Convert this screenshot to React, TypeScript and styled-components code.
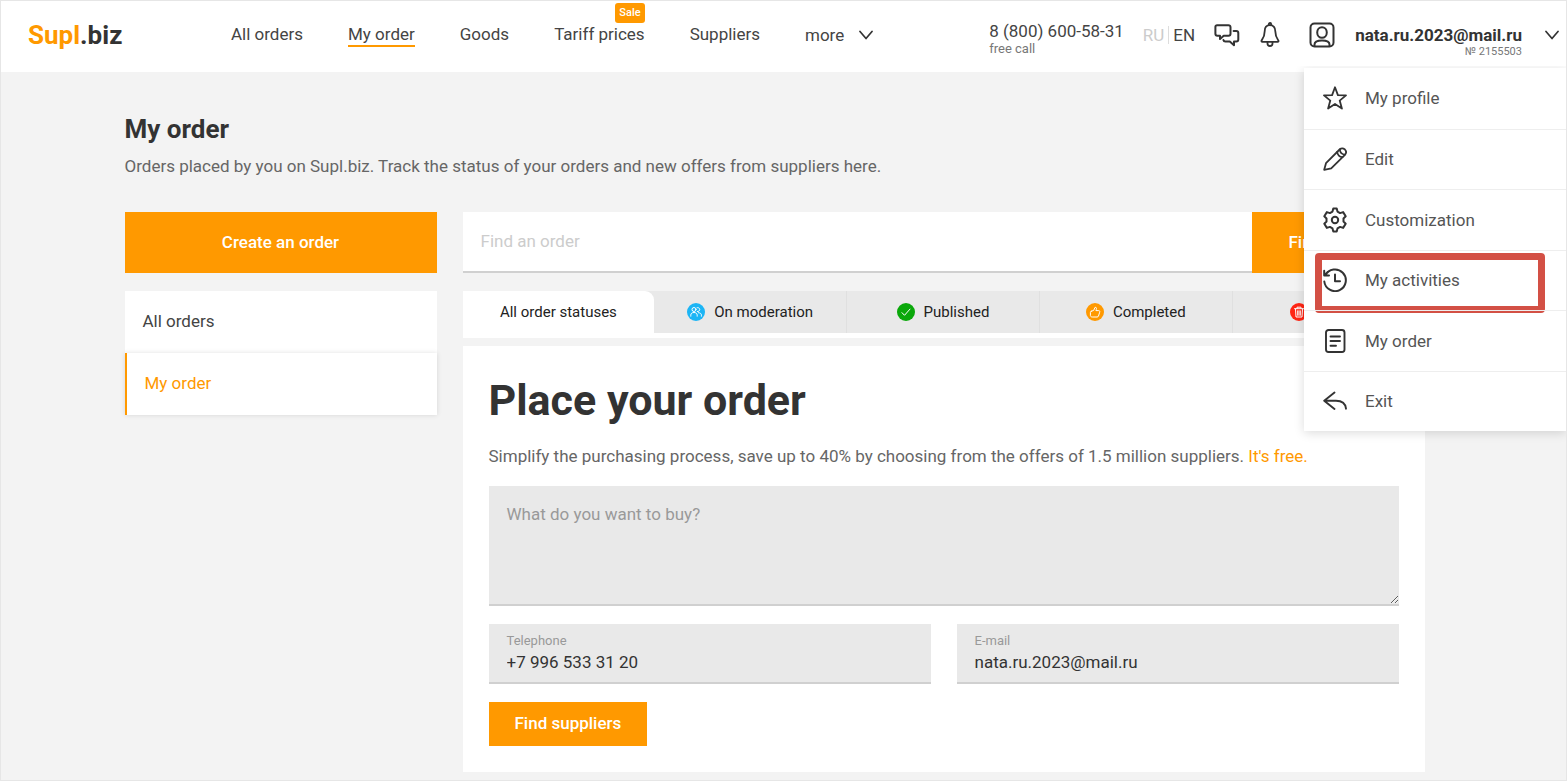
import React from "react";
import styled, { createGlobalStyle, css } from "styled-components";

const orange = "#ff9900";
const ink = "#333333";
const surface = "#e9e9e9";

const GlobalStyle = createGlobalStyle`
  *, *::before, *::after { box-sizing: border-box; }
  body {
    margin: 0;
    background: #f3f3f3;
    color: ${ink};
    font-family: Roboto, "Liberation Sans", sans-serif;
    font-size: 17px;
    line-height: 24px;
  }
  a { color: inherit; text-decoration: none; }
  button, input, textarea { font: inherit; color: inherit; border: 0; border-radius: 0; }
  button { cursor: pointer; background: none; padding: 0; }
  h1, h2, p, ul { margin: 0; padding: 0; }
  ul { list-style: none; }
`;

const Page = styled.div`
  min-height: 100vh;
  border: 1px solid #e6e6e6;
`;

const Header = styled.header`
  position: relative;
  display: flex;
  align-items: center;
  height: 71px;
  padding: 0 7px 4px 27px;
  background: #ffffff;
`;

const Logo = styled.a`
  width: 203px;
  font-size: 26px;
  font-weight: 700;
  line-height: 32px;
  span { color: ${orange}; }
`;

const MainNav = styled.nav`
  display: flex;
  align-items: center;
  gap: 45px;
`;

const NavLink = styled.a<{ $active?: boolean }>`
  position: relative;
  line-height: 22px;
  color: #444444;
  border-bottom: 2px solid ${({ $active }) => ($active ? orange : "transparent")};
`;

const SaleBadge = styled.span`
  position: absolute;
  right: 0;
  bottom: 22px;
  padding: 0 4px;
  border-radius: 3px;
  background: ${orange};
  color: #ffffff;
  font-size: 11px;
  font-weight: 500;
  line-height: 20px;
`;

const MoreButton = styled.button`
  display: flex;
  align-items: center;
  gap: 15px;
  color: #444444;
  line-height: 22px;
`;

const HeaderTools = styled.div`
  display: flex;
  align-items: center;
  margin-left: auto;
`;

const Phone = styled.a`
  display: flex;
  flex-direction: column;
  margin-right: 19px;
  padding-top: 8px;
  color: #444444;
  line-height: 20px;
`;

const Caption = styled.span`
  font-size: 13px;
  line-height: 16px;
  color: #777777;
`;

const Languages = styled.div`
  display: flex;
  gap: 4px;
  margin-right: 19px;
  line-height: 18px;
`;

const Language = styled.a<{ $current?: boolean }>`
  color: ${({ $current }) => ($current ? "#444444" : "#cccccc")};
  & + & { padding-left: 4px; border-left: 1px solid #dddddd; }
`;

const IconButton = styled.button`
  display: flex;
  margin-right: 20px;
`;

const Account = styled.button`
  display: flex;
  align-items: center;
  gap: 20px;
  margin-left: 9px;
`;

const AccountName = styled.span`
  position: relative;
  font-weight: 700;
`;

const AccountNumber = styled.span`
  position: absolute;
  top: 22px;
  right: 0;
  font-size: 11px;
  font-weight: 400;
  line-height: 14px;
  color: #777777;
`;

const ChevronSlot = styled.span`
  display: flex;
  margin-left: 3px;
`;

const AccountMenu = styled.ul`
  position: absolute;
  z-index: 2;
  top: 67px;
  right: 0;
  display: grid;
  grid-auto-rows: 1fr;
  width: 262px;
  height: 363px;
  background: #ffffff;
  box-shadow: 0 2px 10px rgba(0, 0, 0, 0.14);
  clip-path: inset(-2px 0 -14px -14px);
`;

const MenuItem = styled.li`
  position: relative;
  & + & { border-top: 1px solid #eeeeee; }
`;

const MenuLink = styled.a`
  display: flex;
  align-items: center;
  gap: 18px;
  height: 100%;
  padding-left: 19px;
  color: #555555;
`;

const Highlight = styled.span`
  position: absolute;
  inset: 2px 21px -3px 11px;
  border: 7px solid #d35045;
  border-radius: 4px;
  pointer-events: none;
`;

const Scroller = styled.div`
  padding-right: 18px;
`;

const Content = styled.main`
  max-width: 1300px;
  margin: 0 auto;
  padding: 41px 0 8px;
`;

const PageTitle = styled.h1`
  font-size: 26px;
  font-weight: 700;
  line-height: 32px;
`;

const PageLead = styled.p`
  padding-top: 9px;
  color: #666666;
`;

const Columns = styled.div`
  display: grid;
  grid-template-columns: 312px minmax(0, 1fr);
  gap: 26px;
  margin-top: 34px;
`;

const Stack = styled.div`
  display: flex;
  flex-direction: column;
  gap: 18px;
`;

const Button = styled.button<{ $size: "large" | "small" }>`
  background: ${orange};
  color: #ffffff;
  font-weight: 500;
  ${({ $size }) =>
    $size === "large"
      ? css`height: 61px; padding: 0 36px 2px;`
      : css`height: 44px; padding: 0 26px 2px; align-self: flex-start;`}
`;

const SideNav = styled.nav`
  display: flex;
  flex-direction: column;
`;

const SideLink = styled.a<{ $active?: boolean }>`
  display: flex;
  align-items: center;
  height: 62px;
  padding: 0 18px 2px;
  background: #ffffff;
  color: #444444;
  ${({ $active }) =>
    $active &&
    css`
      border-left: 2px solid ${orange};
      color: ${orange};
      box-shadow: 0 0 5px rgba(0, 0, 0, 0.12);
    `}
`;

const SearchForm = styled.form`
  display: flex;
`;

const SearchInput = styled.input`
  flex: 1;
  min-width: 0;
  height: 61px;
  padding: 0 18px 2px;
  border-bottom: 2px solid #d0d0d0;
  background: #ffffff;
  &::placeholder { color: #cccccc; opacity: 1; }
`;

const Results = styled.div`
  display: flex;
  flex-direction: column;
  gap: 8px;
`;

const Tabs = styled.div`
  display: flex;
  padding-bottom: 5px;
  background: linear-gradient(to bottom, ${surface} 42px, #ffffff 42px);
`;

const Tab = styled.button<{ $active?: boolean }>`
  display: flex;
  flex: 1;
  align-items: center;
  justify-content: center;
  gap: 9px;
  height: 42px;
  border-right: 1px solid #e0e0e0;
  background: ${surface};
  color: #222222;
  font-size: 15px;
  &:last-child { border-right: 0; }
  ${({ $active }) =>
    $active &&
    css`
      border-right: 0;
      border-top-right-radius: 9px;
      background: #ffffff;
    `}
`;

const OrderCard = styled.form`
  display: flex;
  flex-direction: column;
  gap: 18px;
  padding: 26px;
  background: #ffffff;
`;

const CardTitle = styled.h2`
  font-size: 43px;
  font-weight: 700;
  line-height: 56px;
`;

const CardLead = styled.p`
  color: #666666;
  a { color: ${orange}; }
`;

const CardHeading = styled.div`
  display: flex;
  flex-direction: column;
  gap: 16px;
`;

const OrderText = styled.textarea`
  display: block;
  width: 100%;
  height: 120px;
  padding: 16px 18px;
  border-bottom: 2px solid #d0d0d0;
  background: ${surface};
  resize: vertical;
  &::placeholder { color: #999999; opacity: 1; }
`;

const FieldRow = styled.div`
  display: grid;
  grid-template-columns: 1fr 1fr;
  gap: 26px;
`;

const Field = styled.label`
  display: flex;
  flex-direction: column;
  height: 60px;
  padding: 9px 18px 0;
  border-bottom: 2px solid #d0d0d0;
  background: ${surface};
  font-size: 13px;
  line-height: 16px;
  color: #999999;
`;

const FieldInput = styled.input`
  height: 26px;
  padding: 0;
  background: transparent;
  color: ${ink};
  font-size: 17px;
`;

type IconProps = { width?: number; height?: number; stroke?: number; children: React.ReactNode };

const Icon = ({ width = 24, height = 24, stroke = 2, children }: IconProps) => (
  <svg
    width={width}
    height={height}
    viewBox={`0 0 ${width} ${height}`}
    fill="none"
    stroke={ink}
    strokeWidth={stroke}
    strokeLinecap="round"
    strokeLinejoin="round"
    aria-hidden="true"
  >
    {children}
  </svg>
);

const Chevron = () => (
  <Icon width={14} height={10} stroke={1.7}>
    <path d="M1 1.5 7 8.500 13 1.500" />
  </Icon>
);

const ChatIcon = () => (
  <Icon width={26}>
    <path d="M3 2.2h11.5a2 2 0 0 1 2 2v6.6a2 2 0 0 1-2 2h-4.8L6 16v-3.2H3.4a2 2 0 0 1-2-2V3.8A1.6 1.6 0 0 1 3 2.2Z" />
    <path d="M19.6 8h2.700a2 2 0 0 1 2 2v6.600a2 2 0 0 1-2 2h-2.300v3.600l-4.200-3.600h-4.400a2 2 0 0 1-2-1.600" />
  </Icon>
);

const BellIcon = () => (
  <Icon width={20} height={26} stroke={1.8}>
    <path d="M10 3.200c-3.400 0-5.300 2.600-5.300 6 0 4.600-1.300 6.900-3 9.200-.5.700-.2 1.500.7 1.500h15.200c.9 0 1.200-.8.700-1.500-1.700-2.300-3-4.600-3-9.200 0-3.400-1.900-6-5.300-6Z" />
    <path d="M8.800 3.200V2.200a1.200 1.200 0 0 1 2.400 0v1M7.500 20.200v1.300a2.500 2.500 0 0 0 5 0v-1.300" />
  </Icon>
);

const UserIcon = () => (
  <Icon width={26} height={26}>
    <rect x="1.500" y="1.500" width="23" height="23" rx="4" />
    <ellipse cx="13" cy="10.500" rx="4.800" ry="5.300" />
    <path d="M5.500 24v-1.500c0-2.800 3-4 7.500-4s7.500 1.200 7.500 4V24" />
  </Icon>
);

const StarIcon = () => (
  <Icon stroke={1.8}>
    <path d="m12 1.300 2.900 7.800 8.100.300-6.300 5.200 2.200 8L12 18l-6.900 4.600 2.200-8L1 9.400l8.100-.300Z" />
  </Icon>
);

const PencilIcon = () => (
  <Icon stroke={1.8}>
    <path d="M1.200 22.800 3 16.200 16.600 2.500a4 4 0 0 1 5.300 0 3.900 3.900 0 0 1 0 5.300L8.200 21.300Z" />
    <path d="M14.200 5c.4 3 2.400 4.900 5.300 5.200M16.800 2.500c.3 2.900 2.100 4.800 5 5.200" />
  </Icon>
);

const GearIcon = () => (
  <Icon width={24} height={26}>
    <path d="M9.500 4.600 10.300 1.500h3.400l.8 3.100 2.600 1.500 3-1 2.600 4.200-2.200 2.200v3l2.200 2.200-2.600 4.200-3-1-2.600 1.500-.8 3.100h-3.400l-.8-3.100-2.600-1.500-3 1-2.600-4.200 2.200-2.200v-3L1.300 9.300l2.600-4.200 3 1Z" />
    <circle cx="12" cy="13" r="3.200" />
  </Icon>
);

const HistoryIcon = () => (
  <Icon>
    <path d="M2.400 7.400A10.800 10.800 0 1 1 1.300 13.500M1.200 2.800v4.800h4.800M1.500 7.300l3-3.200M12 6.500v6.800h5" />
  </Icon>
);

const DocumentIcon = () => (
  <Icon stroke={1.900}>
    <rect x="3" y="1" width="18.500" height="22" rx="2.500" />
    <path d="M7.500 7.500h9.500M7.500 12h9.500M7.500 16.800h5.500" />
  </Icon>
);

const ExitIcon = () => (
  <Icon stroke={1.900}>
    <path d="M11.500 3.500 1.200 11.700l10.300 8.200M1.500 11.700h11.500c5.600 0 9.500 2.800 10 8" />
  </Icon>
);

const StatusIcon = ({ color, children }: { color: string; children: React.ReactNode }) => (
  <svg width="18" height="18" viewBox="0 0 18 18" fill="none" stroke="#ffffff" strokeLinecap="round" strokeLinejoin="round" aria-hidden="true">
    <circle cx="9" cy="9" r="9" fill={color} stroke="none" />
    {children}
  </svg>
);

const menuItems = [
  { label: "My profile", icon: <StarIcon /> },
  { label: "Edit", icon: <PencilIcon /> },
  { label: "Customization", icon: <GearIcon /> },
  { label: "My activities", icon: <HistoryIcon />, highlighted: true },
  { label: "My order", icon: <DocumentIcon /> },
  { label: "Exit", icon: <ExitIcon /> },
];

const statusTabs = [
  { label: "All order statuses", icon: null },
  {
    label: "On moderation",
    icon: (
      <StatusIcon color="#1cb5f5">
        <circle cx="7" cy="6.500" r="2" />
        <path d="M3.800 13.200v-1c0-1.800 1.200-2.700 3.200-2.700s3.200 1 3.200 2.700v1M10 4.700a2 2 0 1 1 .3 3.800M11.500 9.700c1.800 0 2.900 1 2.900 2.500v1" />
      </StatusIcon>
    ),
  },
  {
    label: "Published",
    icon: (
      <StatusIcon color="#0aa80a">
        <path d="m5 9.700 2.500 2.600 5.500-6.200" />
      </StatusIcon>
    ),
  },
  {
    label: "Completed",
    icon: (
      <StatusIcon color={orange}>
        <path d="M5.200 8.300 7.700 7.400 9 4.400c1.500-.3 1.700.8 1.300 1.900l-.4 1.300h2.800c1 0 1.300.8 1 1.600l-1.200 3.800c-.2.700-.7 1-1.400 1H6.200c-1 0-1.800-.6-1.800-1.500V9.500c0-.6.300-1 .8-1.200Z" />
      </StatusIcon>
    ),
  },
  {
    label: "Deleted",
    icon: (
      <StatusIcon color="#ff2514">
        <path d="M4.500 5.700h9M7 5.500V4.200h4v1.300M5.500 6l.5 8h6l.5-8M7.700 7.800v4.500M9 7.800v4.500M10.300 7.800v4.500" />
      </StatusIcon>
    ),
  },
];

export default function App() {
  return (
    <Page>
      <GlobalStyle />
      <Header>
        <Logo href="#"><span>Supl</span>.biz</Logo>
        <MainNav aria-label="Main">
          <NavLink href="#">All orders</NavLink>
          <NavLink href="#" $active aria-current="page">My order</NavLink>
          <NavLink href="#">Goods</NavLink>
          <NavLink href="#">Tariff prices<SaleBadge>Sale</SaleBadge></NavLink>
          <NavLink href="#">Suppliers</NavLink>
          <MoreButton type="button">more<Chevron /></MoreButton>
        </MainNav>
        <HeaderTools>
          <Phone href="tel:88006005831">
            8 (800) 600-58-31
            <Caption>free call</Caption>
          </Phone>
          <Languages>
            <Language href="#">RU</Language>
            <Language href="#" $current>EN</Language>
          </Languages>
          <IconButton type="button" aria-label="Messages"><ChatIcon /></IconButton>
          <IconButton type="button" aria-label="Notifications"><BellIcon /></IconButton>
          <Account type="button" aria-expanded="true">
            <UserIcon />
            <AccountName>
              nata.ru.2023@mail.ru
              <AccountNumber>№ 2155503</AccountNumber>
            </AccountName>
            <ChevronSlot><Chevron /></ChevronSlot>
          </Account>
        </HeaderTools>
        <AccountMenu>
          {menuItems.map(({ label, icon, highlighted }) => (
            <MenuItem key={label}>
              <MenuLink href="#">{icon}{label}</MenuLink>
              {highlighted && <Highlight />}
            </MenuItem>
          ))}
        </AccountMenu>
      </Header>
      <Scroller>
        <Content>
          <PageTitle>My order</PageTitle>
          <PageLead>
            Orders placed by you on Supl.biz. Track the status of your orders and new offers from suppliers here.
          </PageLead>
          <Columns>
            <Stack>
              <Button type="button" $size="large">Create an order</Button>
              <SideNav aria-label="Orders">
                <SideLink href="#">All orders</SideLink>
                <SideLink href="#" $active aria-current="page">My order</SideLink>
              </SideNav>
            </Stack>
            <Stack>
              <SearchForm>
                <SearchInput type="text" placeholder="Find an order" aria-label="Find an order" />
                <Button type="button" $size="large">Find an order</Button>
              </SearchForm>
              <Results>
                <Tabs role="tablist">
                  {statusTabs.map(({ label, icon }, index) => (
                    <Tab key={label} type="button" role="tab" $active={index === 0} aria-selected={index === 0}>
                      {icon}{label}
                    </Tab>
                  ))}
                </Tabs>
                <OrderCard>
                  <CardHeading>
                    <CardTitle>Place your order</CardTitle>
                    <CardLead>
                      Simplify the purchasing process, save up to 40% by choosing from the offers of 1.5 million suppliers.{" "}
                      <a href="#">It's free.</a>
                    </CardLead>
                  </CardHeading>
                  <OrderText placeholder="What do you want to buy?" aria-label="What do you want to buy?" />
                  <FieldRow>
                    <Field>
                      Telephone
                      <FieldInput type="tel" defaultValue="+7 996 533 31 20" />
                    </Field>
                    <Field>
                      E-mail
                      <FieldInput type="email" defaultValue="nata.ru.2023@mail.ru" />
                    </Field>
                  </FieldRow>
                  <Button type="button" $size="small">Find suppliers</Button>
                </OrderCard>
              </Results>
            </Stack>
          </Columns>
        </Content>
      </Scroller>
    </Page>
  );
}
